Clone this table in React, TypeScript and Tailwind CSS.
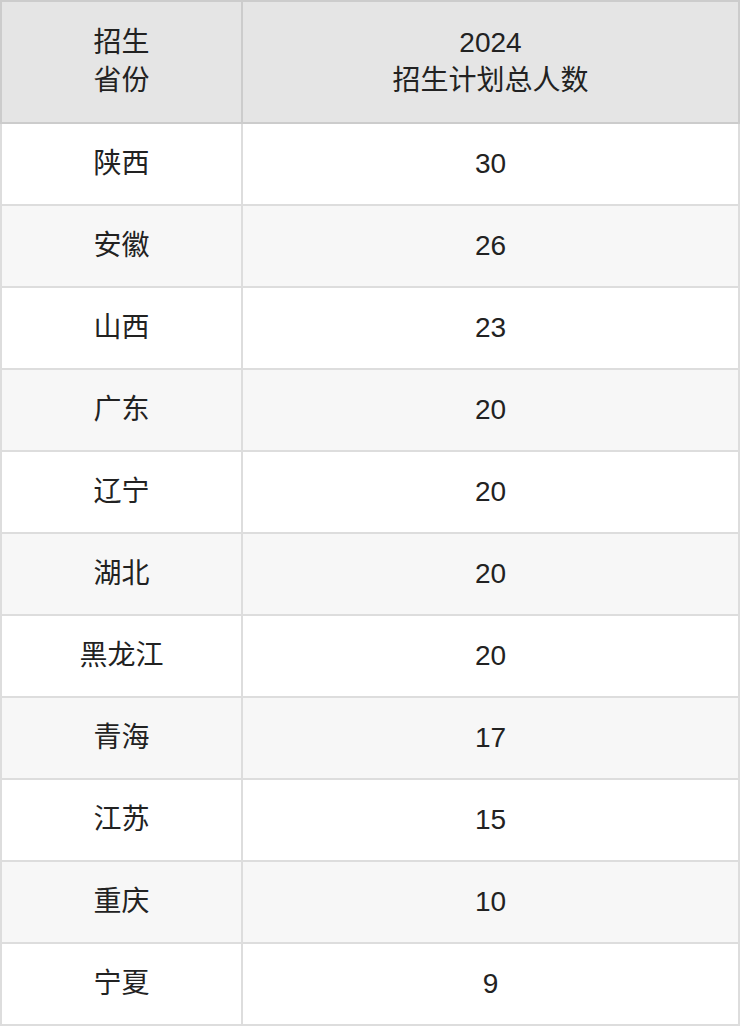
import React from 'react';

const rows: [string, string][] = [
    ['陕西', '30'],
    ['安徽', '26'],
    ['山西', '23'],
    ['广东', '20'],
    ['辽宁', '20'],
    ['湖北', '20'],
    ['黑龙江', '20'],
    ['青海', '17'],
    ['江苏', '15'],
    ['重庆', '10'],
    ['宁夏', '9'],
];

const App: React.FC = () => {
    return (
        <div
            className="w-[740px] bg-white text-[#222222] text-[28px] leading-[38px]"
            style={{ fontFamily: '"Liberation Sans", "Noto Sans CJK SC", sans-serif' }}
        >
            <table className="w-[740px] table-fixed border-collapse">
                <colgroup>
                    <col className="w-[241px]" />
                    <col />
                </colgroup>
                <thead>
                    <tr className="h-[122px] bg-[#e5e5e5]">
                        <th className="border-2 border-[#cccccc] font-normal text-center align-middle">
                            招生
                            <br />
                            省份
                        </th>
                        <th className="border-2 border-[#cccccc] font-normal text-center align-middle">
                            2024
                            <br />
                            招生计划总人数
                        </th>
                    </tr>
                </thead>
                <tbody>
                    {rows.map(([province, count], i) => (
                        <tr key={province} className={`h-[82px] ${i % 2 === 1 ? 'bg-[#f7f7f7]' : 'bg-white'}`}>
                            <td className="border-2 border-[#dddddd] text-center align-middle">{province}</td>
                            <td className="border-2 border-[#dddddd] text-center align-middle">{count}</td>
                        </tr>
                    ))}
                </tbody>
            </table>
        </div>
    );
};

export default App;
